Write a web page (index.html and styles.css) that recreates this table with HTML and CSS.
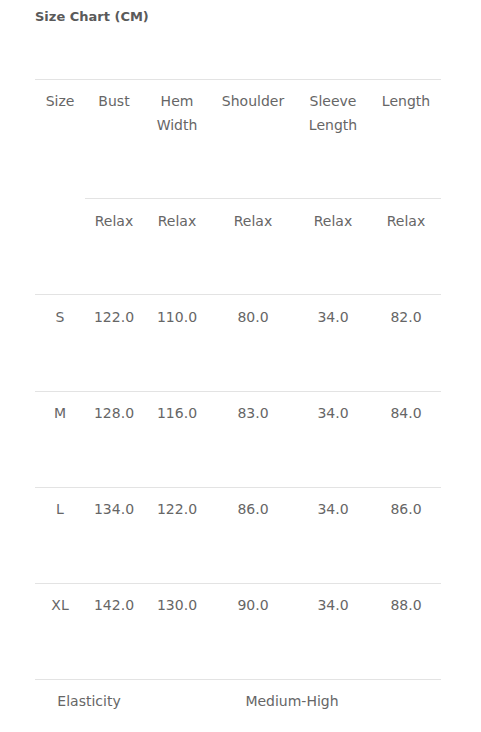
FILE: index.html
```html
<!DOCTYPE html>
<html>
<head>
<meta charset="utf-8">
<link rel="stylesheet" href="styles.css">
</head>
<body>
<div class="page">
  <h2 class="title">Size Chart (CM)</h2>
  <table class="chart">
    <colgroup>
      <col class="c1"><col class="c2"><col class="c3"><col class="c4"><col class="c5"><col class="c6">
    </colgroup>
    <tr class="head">
      <td rowspan="2">Size</td><td>Bust</td><td>Hem<br>Width</td><td>Shoulder</td><td>Sleeve<br>Length</td><td>Length</td>
    </tr>
    <tr class="fit">
      <td>Relax</td><td>Relax</td><td>Relax</td><td>Relax</td><td>Relax</td>
    </tr>
    <tr class="first"><td>S</td><td>122.0</td><td>110.0</td><td>80.0</td><td>34.0</td><td>82.0</td></tr>
    <tr><td>M</td><td>128.0</td><td>116.0</td><td>83.0</td><td>34.0</td><td>84.0</td></tr>
    <tr><td>L</td><td>134.0</td><td>122.0</td><td>86.0</td><td>34.0</td><td>86.0</td></tr>
    <tr><td>XL</td><td>142.0</td><td>130.0</td><td>90.0</td><td>34.0</td><td>88.0</td></tr>
    <tr class="last"><td colspan="2">Elasticity</td><td colspan="4">Medium-High</td></tr>
  </table>
</div>
</body>
</html>
```
FILE: styles.css
```css
html, body {
  margin: 0;
  padding: 0;
  background: #ffffff;
}
body {
  font-family: "DejaVu Sans", sans-serif;
  color: #666666;
}
.page {
  padding: 7px 40px 0 35px;
}
.title {
  margin: 0;
  font-size: 13px;
  line-height: 20px;
  font-weight: bold;
  color: #5a5a5a;
  height: 72px;
}
.chart {
  width: 406px;
  border-collapse: collapse;
  table-layout: fixed;
}
.c1 { width: 50px; }
.c2 { width: 58px; }
.c3 { width: 68px; }
.c4 { width: 84px; }
.c5 { width: 76px; }
.c6 { width: 70px; }
.chart td {
  border-top: 1px solid #e3e3e3;
  padding: 9px 0 62px;
  font-size: 14px;
  line-height: 24px;
  text-align: center;
  vertical-align: top;
  color: #666666;
  white-space: nowrap;
}
.chart tr.head td {
  padding-top: 9px;
  padding-bottom: 61px;
}
.chart tr.fit td {
  padding-top: 10px;
  padding-bottom: 61px;
}
.chart tr.first td {
  padding-top: 10px;
  padding-bottom: 62px;
}
.chart tr.last td {
  padding-bottom: 20px;
}
```
